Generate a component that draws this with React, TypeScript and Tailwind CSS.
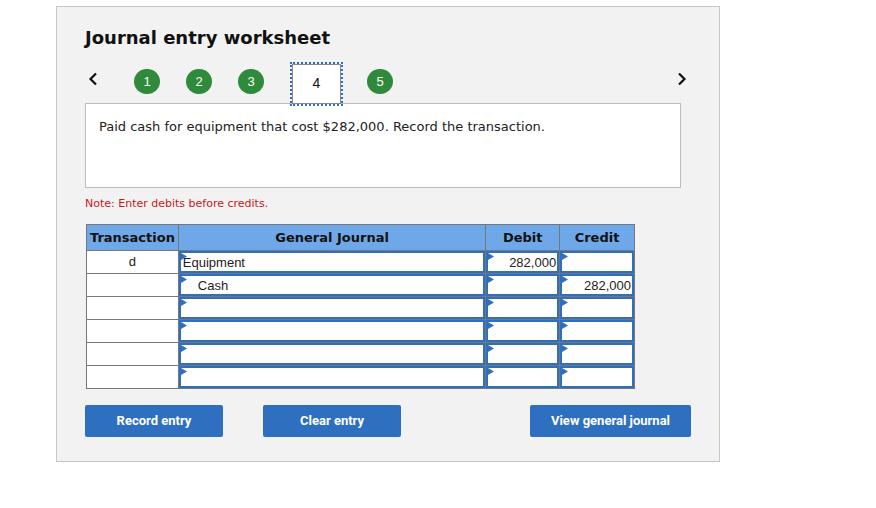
import React from "react";

const Arrow = () => (
  <svg className="absolute left-0 top-0" width="6" height="8" viewBox="0 0 6 8">
    <polygon points="0,0 6,3.5 0,7" fill="#2f6fc0" />
  </svg>
);

const InputCell = ({ w, text, align = "left", indent = false }: { w: string; text?: string; align?: "left" | "right"; indent?: boolean }) => (
  <div className={`${w} h-[23px] border-r border-b border-[#777777] bg-white`}>
    <div className="relative h-full border-2 border-[#2f6fc0] flex items-center">
      <Arrow />
      {text && (
        <span
          className={`w-full text-[13px] text-[#222] leading-none ${align === "right" ? "text-right pr-[1px]" : indent ? "pl-[17px]" : "pl-[2px]"}`}
          style={{ fontFamily: '"Liberation Sans", Arial, sans-serif' }}
        >
          {text}
        </span>
      )}
    </div>
  </div>
);

const Circle = ({ n }: { n: number }) => (
  <div
    className="w-[26px] h-[25px] rounded-full bg-[#2f8a3c] text-white text-[13px] flex items-center justify-center mt-[7px]"
    style={{ fontFamily: '"Liberation Sans", Arial, sans-serif' }}
  >
    {n}
  </div>
);

export default function App() {
  const rows = [
    { t: "d", acct: "Equipment", debit: "282,000", credit: "", indent: false },
    { t: "", acct: "Cash", debit: "", credit: "282,000", indent: true },
    { t: "", acct: "", debit: "", credit: "", indent: false },
    { t: "", acct: "", debit: "", credit: "", indent: false },
    { t: "", acct: "", debit: "", credit: "", indent: false },
    { t: "", acct: "", debit: "", credit: "", indent: false },
  ];
  const verdana = { fontFamily: '"DejaVu Sans", Verdana, sans-serif' };
  return (
    <div className="w-[876px] h-[508px] bg-white pt-[6px] pl-[56px]" style={verdana}>
      <div className="w-[664px] h-[456px] border border-[#c6c6c6] bg-[#f2f2f2] pl-[28px] pr-[28px] pt-[20px]">
        <h1 className="text-[18px] font-bold leading-[22px] text-[#111]">Journal entry worksheet</h1>

        <div className="flex items-start h-[41px] mt-[13px]">
          <svg className="ml-[3px] mt-[10px]" width="10" height="14" viewBox="0 0 10 14">
            <polyline points="8,1.5 2.5,7 8,12.5" fill="none" stroke="#111" strokeWidth="2.2" />
          </svg>
          <div className="ml-[36px]"><Circle n={1} /></div>
          <div className="ml-[26px]"><Circle n={2} /></div>
          <div className="ml-[26px]"><Circle n={3} /></div>
          <div className="ml-[26px] relative z-10 w-[53px] h-[44px] border-2 border-dotted border-[#2f6fc0]">
            <div
              className="w-full h-full border border-[#8a8a8a] bg-white flex justify-center pt-[8px] text-[14px] text-[#111]"
              style={{ fontFamily: '"Liberation Sans", Arial, sans-serif' }}
            >
              4
            </div>
          </div>
          <div className="ml-[24px]"><Circle n={5} /></div>
          <svg className="ml-auto mr-[4px] mt-[10px]" width="10" height="14" viewBox="0 0 10 14">
            <polyline points="2,1.5 7.5,7 2,12.5" fill="none" stroke="#111" strokeWidth="2.2" />
          </svg>
        </div>

        <div className="w-[596px] h-[85px] border border-[#bdbdbd] bg-white pl-[13px] pt-[14px] text-[13px] text-[#222] leading-[18px]">
          Paid cash for equipment that cost $282,000. Record the transaction.
        </div>

        <div className="mt-[9px] text-[11px] leading-[14px] text-[#c8181e]">Note: Enter debits before credits.</div>

        <div className="mt-[13px] ml-[1px] w-[549px]">
          <div className="flex h-[27px] bg-[#6fa8e8] border-t border-l border-[#777777] text-[13px] font-bold text-[#111]">
            <div className="w-[92px] border-r border-b border-[#777777] flex items-center justify-center">Transaction</div>
            <div className="w-[308px] border-r border-b border-[#777777] flex items-center justify-center">General Journal</div>
            <div className="w-[74px] border-r border-b border-[#777777] flex items-center justify-center">Debit</div>
            <div className="w-[75px] border-r border-b border-[#777777] flex items-center justify-center">Credit</div>
          </div>
          {rows.map((r, i) => (
            <div key={i} className="flex border-l border-[#777777]">
              <div
                className="w-[92px] h-[23px] border-r border-b border-[#777777] bg-white flex items-center justify-center text-[13px] text-[#222]"
                style={{ fontFamily: '"Liberation Sans", Arial, sans-serif' }}
              >
                {r.t}
              </div>
              <InputCell w="w-[308px]" text={r.acct} indent={r.indent} />
              <InputCell w="w-[74px]" text={r.debit} align="right" />
              <InputCell w="w-[75px]" text={r.credit} align="right" />
            </div>
          ))}
        </div>

        <div className="flex mt-[16px]" style={{ fontFamily: 'Roboto, "Liberation Sans", sans-serif' }}>
          <button className="w-[138px] h-[32px] rounded-[2px] bg-[#2f6fc0] text-white text-[13px] font-bold">Record entry</button>
          <button className="ml-[40px] w-[138px] h-[32px] rounded-[2px] bg-[#2f6fc0] text-white text-[13px] font-bold">Clear entry</button>
          <button className="ml-auto w-[161px] h-[32px] rounded-[2px] bg-[#2f6fc0] text-white text-[13px] font-bold">View general journal</button>
        </div>
      </div>
    </div>
  );
}
